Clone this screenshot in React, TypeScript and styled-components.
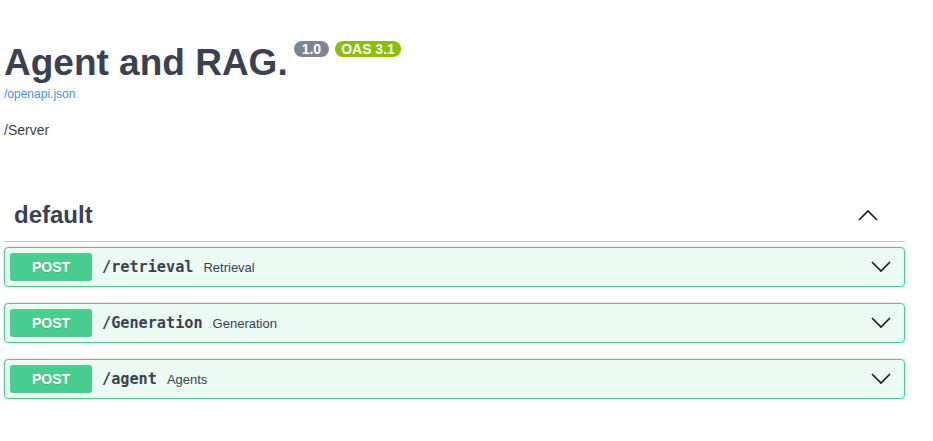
import React from 'react';
import styled, { createGlobalStyle } from 'styled-components';

const GlobalStyle = createGlobalStyle`
  body {
    margin: 0;
    background: #fff;
    font-family: 'Liberation Sans', Arial, sans-serif;
    color: #3b4151;
  }
`;

const Wrapper = styled.div`
  padding: 41px 28px 0 4px;
`;

const Info = styled.div`
  display: flex;
  flex-direction: column;
  align-items: flex-start;
`;

const TitleRow = styled.div`
  display: flex;
  align-items: flex-start;
`;

const Title = styled.h2`
  margin: 0;
  font-size: 37px;
  line-height: 44px;
  font-weight: 700;
  color: #3b4151;
`;

const Badge = styled.span<{ $bg: string; $gap: number; $pad: number }>`
  margin: 0 0 0 ${(p) => p.$gap}px;
  padding: 1px ${(p) => p.$pad}px;
  border-radius: 57px;
  background: ${(p) => p.$bg};
  color: #fff;
  font-size: 14px;
  line-height: 14px;
  font-weight: 700;
`;

const SpecLink = styled.a`
  margin-top: 1px;
  font-size: 12px;
  line-height: 16px;
  color: #4990e2;
  text-decoration: none;
`;

const ServerText = styled.div`
  margin-top: 19px;
  font-size: 14px;
  line-height: 18px;
  color: #3b4151;
`;

const Tag = styled.section`
  margin-top: 51px;
`;

const TagHeader = styled.h3`
  display: flex;
  align-items: center;
  justify-content: space-between;
  margin: 0 0 5px;
  padding: 9px 20px 11px 10px;
  font-size: 24px;
  line-height: 31px;
  font-weight: 700;
  color: #3b4151;
  border-bottom: 1px solid rgba(59, 65, 81, 0.3);
`;

const Chevron = styled.svg<{ $offset: number }>`
  display: block;
  margin-right: ${(p) => p.$offset}px;
`;

const OpBlock = styled.div`
  display: flex;
  align-items: center;
  height: 40px;
  box-sizing: border-box;
  margin-bottom: 16px;
  padding: 0 5px;
  border: 1px solid #49cc90;
  border-radius: 4px;
  background: rgba(73, 204, 144, 0.1);
  box-shadow: 0 0 3px rgba(0, 0, 0, 0.19);
`;

const Method = styled.span`
  width: 82px;
  padding: 6px 0;
  border-radius: 3px;
  background: #49cc90;
  color: #fff;
  font-size: 14px;
  line-height: 16px;
  font-weight: 700;
  text-align: center;
  text-shadow: 0 1px 0 rgba(0, 0, 0, 0.1);
`;

const Path = styled.span`
  padding: 0 10px;
  font-family: 'DejaVu Sans Mono', 'Liberation Mono', monospace;
  font-size: 15.2px;
  font-weight: 700;
  color: #3b4151;
`;

const Summary = styled.span`
  flex: 1;
  font-size: 13px;
  color: #3b4151;
`;

const ChevronIcon = ({ up, offset }: { up?: boolean; offset: number }) => (
  <Chevron $offset={offset} width="20" height="12" viewBox="0 0 20 12">
    <path
      d={up ? 'M1 11 L10 2 L19 11' : 'M1 1 L10 10 L19 1'}
      fill="none"
      stroke="#1f1f1f"
      strokeWidth="1.7"
    />
  </Chevron>
);

const operations = [
  { path: '/retrieval', summary: 'Retrieval' },
  { path: '/Generation', summary: 'Generation' },
  { path: '/agent', summary: 'Agents' },
];

const App = (): JSX.Element => (
  <>
    <GlobalStyle />
    <Wrapper>
      <Info>
        <TitleRow>
          <Title>Agent and RAG.</Title>
          <Badge $bg="#7d8492" $gap={6} $pad={8}>1.0</Badge>
          <Badge $bg="#89bf04" $gap={6} $pad={6}>OAS 3.1</Badge>
        </TitleRow>
        <SpecLink href="#">/openapi.json</SpecLink>
        <ServerText>/Server</ServerText>
      </Info>
      <Tag>
        <TagHeader>
          <span>default</span>
          <ChevronIcon up offset={7} />
        </TagHeader>
        {operations.map((op) => (
          <OpBlock key={op.path}>
            <Method>POST</Method>
            <Path>{op.path}</Path>
            <Summary>{op.summary}</Summary>
            <ChevronIcon offset={8} />
          </OpBlock>
        ))}
      </Tag>
    </Wrapper>
  </>
);

export default App;
